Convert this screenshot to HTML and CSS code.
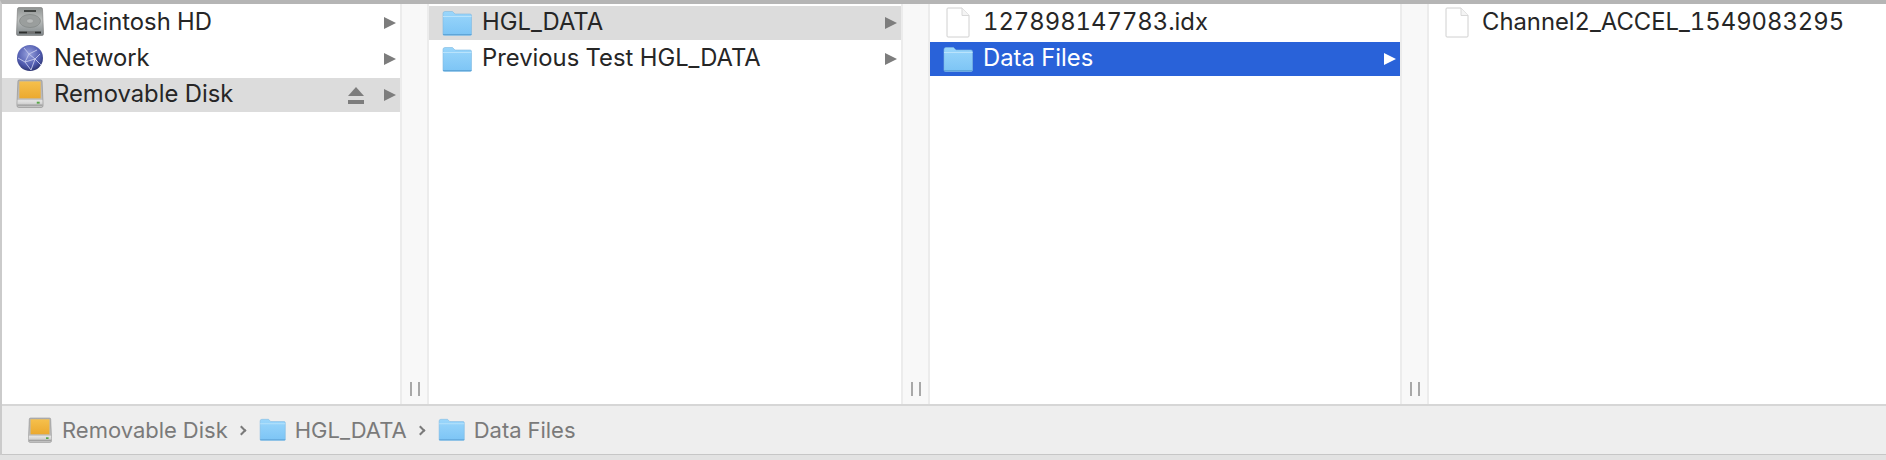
FILE: index.html
```html
<!DOCTYPE html>
<html lang="en">
<head>
<meta charset="utf-8">
<title>Finder</title>
<link rel="stylesheet" href="styles.css">
</head>
<body>
<svg class="defs" width="0" height="0" aria-hidden="true">
  <defs>
    <linearGradient id="fb" x1="0" y1="0" x2="0" y2="1"><stop offset="0" stop-color="#9ad6fb"/><stop offset="1" stop-color="#7cc4f5"/></linearGradient>
    <linearGradient id="ob" x1="0" y1="0" x2="0" y2="1"><stop offset="0" stop-color="#f6c04c"/><stop offset="1" stop-color="#eba92f"/></linearGradient>
    <linearGradient id="gb" x1="0" y1="0" x2="0" y2="1"><stop offset="0" stop-color="#b4b4b4"/><stop offset=".7" stop-color="#bdbdbd"/><stop offset=".75" stop-color="#e4e4e4"/><stop offset="1" stop-color="#bcbcbc"/></linearGradient>
    <linearGradient id="hd" x1="0" y1="0" x2="0" y2="1"><stop offset="0" stop-color="#8f9392"/><stop offset=".45" stop-color="#bcbfbe"/><stop offset="1" stop-color="#80878a"/></linearGradient>
    <radialGradient id="globe" cx=".45" cy=".35" r=".75"><stop offset="0" stop-color="#98a2de"/><stop offset=".6" stop-color="#4f5aae"/><stop offset="1" stop-color="#1e2456"/></radialGradient>
    <symbol id="folder" viewBox="0 0 30 26">
      <path d="M1 3.500Q1 1.500 3 1.500H10.500L13 4H28Q29.500 4 29.500 5.500V24Q29.500 25.500 28 25.500H2.500Q1 25.500 1 24Z" fill="url(#fb)" stroke="#7fb8e0" stroke-width=".6"/>
      <path d="M1 6.500H29.500" stroke="#b9e3fc" stroke-width="1"/>
      <path d="M1 24.500H29.500" stroke="#5fa6d8" stroke-width="1"/>
    </symbol>
    <symbol id="file" viewBox="0 0 24 31">
      <path d="M1 2Q1 1 2 1H16L23 8.500V29Q23 30 22 30H2Q1 30 1 29Z" fill="#fff" stroke="#d0d0d0"/>
      <path d="M16 1V8.500H23" fill="#f4f4f4" stroke="#d8d8d8"/>
    </symbol>
    <symbol id="removable" viewBox="0 0 28 30">
      <path d="M3 1H25Q26.500 1 26.500 2.500L27.500 25V27.500Q27.500 29.500 25.500 29.500H2.500Q.5 29.500 .5 27.500V25L1.500 2.500Q1.500 1 3 1Z" fill="url(#gb)" stroke="#8b8b8b" stroke-width=".6"/>
      <rect x="3" y="2.500" width="22" height="17.500" fill="url(#ob)"/>
      <path d="M1 27H27" stroke="#8f8f8f" stroke-width="1"/>
      <rect x="21" y="23.500" width="3" height="2" fill="#58a848"/>
    </symbol>
    <symbol id="hdd" viewBox="0 0 28 29">
      <path d="M3 .5H25Q26.500 .5 26.500 2L27.500 25V27Q27.500 28.500 26 28.500H2Q.5 28.500 .5 27V25L1.500 2Q1.500 .5 3 .5Z" fill="url(#hd)" stroke="#666" stroke-width=".5"/>
      <ellipse cx="14" cy="14" rx="10.500" ry="6.500" fill="#9a9e9d" stroke="#7b7f7e" stroke-width=".6"/>
      <ellipse cx="14" cy="14" rx="3.500" ry="2.200" fill="#b7bab9" stroke="#7b7f7e" stroke-width=".4"/>
      <rect x="8" y="3" width="12" height="2" fill="#3f4341"/>
      <path d="M3 25.500H25" stroke="#2c2e2d" stroke-width="2"/>
      <path d="M12 24.500V26.500M14 24.500V26.500M16 24.500V26.500M18 24.500V26.500" stroke="#d8d8d8" stroke-width=".8"/>
    </symbol>
    <symbol id="globe-icon" viewBox="0 0 26 26">
      <circle cx="13" cy="13" r="13" fill="url(#globe)"/>
      <path d="M7 3 12 9 20 5M12 9 8 17 14 25M12 9 18 14 23 9M18 14 14 25M8 17 1 13M18 14 24 20M8 17 18 14" fill="none" stroke="#c6cbee" stroke-width=".9"/>
    </symbol>
  </defs>
</svg>
<main class="window">
  <div class="columns">
    <section class="col col-a">
      <div class="row">
        <svg class="icon disk"><use href="#hdd"/></svg>
        <span class="name">Macintosh HD</span>
        <span class="arrow"></span>
      </div>
      <div class="row">
        <svg class="icon globe"><use href="#globe-icon"/></svg>
        <span class="name">Network</span>
        <span class="arrow"></span>
      </div>
      <div class="row current">
        <svg class="icon disk"><use href="#removable"/></svg>
        <span class="name">Removable Disk</span>
        <span class="eject"></span>
        <span class="arrow"></span>
      </div>
    </section>
    <div class="divider"></div>
    <section class="col col-b">
      <div class="row current">
        <svg class="icon folder"><use href="#folder"/></svg>
        <span class="name">HGL_DATA</span>
        <span class="arrow"></span>
      </div>
      <div class="row">
        <svg class="icon folder"><use href="#folder"/></svg>
        <span class="name">Previous Test HGL_DATA</span>
        <span class="arrow"></span>
      </div>
    </section>
    <div class="divider"></div>
    <section class="col col-c">
      <div class="row">
        <svg class="icon file"><use href="#file"/></svg>
        <span class="name">127898147783.idx</span>
      </div>
      <div class="row selected">
        <svg class="icon folder"><use href="#folder"/></svg>
        <span class="name">Data Files</span>
        <span class="arrow"></span>
      </div>
    </section>
    <div class="divider"></div>
    <section class="col col-d">
      <div class="row">
        <svg class="icon file"><use href="#file"/></svg>
        <span class="name">Channel2_ACCEL_1549083295</span>
      </div>
    </section>
  </div>
  <footer class="pathbar">
    <svg class="crumb-icon crumb-disk"><use href="#removable"/></svg>
    <span class="crumb">Removable Disk</span>
    <span class="chev"></span>
    <svg class="crumb-icon crumb-folder"><use href="#folder"/></svg>
    <span class="crumb">HGL_DATA</span>
    <span class="chev"></span>
    <svg class="crumb-icon crumb-folder"><use href="#folder"/></svg>
    <span class="crumb">Data Files</span>
  </footer>
</main>
</body>
</html>
```
FILE: styles.css
```css
* { box-sizing: border-box; }
html, body { margin: 0; height: 100%; }
body {
  width: 1886px;
  height: 460px;
  overflow: hidden;
  background: #e2e2e2;
  font-family: "Inter", "Liberation Sans", sans-serif;
  font-variant-numeric: tabular-nums;
  color: #262626;
}
.defs { display: block; height: 0; }
.window {
  height: 455px;
  display: flex;
  flex-direction: column;
  border-top: 4px solid #b5b5b5;
  border-left: 2px solid #cbcbcb;
  background: #fff;
}
.columns { flex: 1; display: flex; min-height: 0; }
.col {
  display: flex;
  flex-direction: column;
  gap: 2px;
  padding-top: 2px;
}
.col-a { width: 398px; }
.col-b { width: 472px; }
.col-c { width: 470px; }
.col-d { flex: 1; }
.divider {
  position: relative;
  width: 29px;
  background: #f8f8f8;
  border-left: 2px solid #ececec;
  border-right: 2px solid #ececec;
}
.divider::after {
  content: "";
  position: absolute;
  left: 8px;
  bottom: 8px;
  width: 6px;
  height: 14px;
  border-left: 2px solid #a8a8a8;
  border-right: 2px solid #a8a8a8;
  box-sizing: content-box;
}
.row {
  height: 34px;
  display: flex;
  align-items: center;
  padding-left: 13px;
  padding-right: 4px;
  font-size: 23.800px;
  line-height: 30px;
  white-space: nowrap;
}
.current { background: #dcdcdc; }
.selected { background: #2962d9; color: #fff; }
.icon { flex: none; display: block; }
.folder { width: 30px; height: 26px; margin-right: 10px; margin-bottom: 1px; }
.file { width: 24px; height: 31px; margin-left: 3px; margin-right: 13px; margin-bottom: 1px; }
.disk { width: 28px; height: 29px; margin-left: 1px; margin-right: 10px; margin-bottom: 3px; }
.globe { width: 26px; height: 26px; margin-left: 2px; margin-right: 11px; margin-bottom: 2px; }
.name { flex: 1; position: relative; top: -1px; }
.arrow {
  flex: none;
  width: 0;
  height: 0;
  margin-bottom: 1px;
  border-left: 12px solid #7d7d7d;
  border-top: 6.500px solid transparent;
  border-bottom: 6.500px solid transparent;
}
.selected .arrow { border-left-color: #fff; }
.eject {
  flex: none;
  position: relative;
  width: 16px;
  height: 17px;
  margin-right: 20px;
}
.eject::before {
  content: "";
  position: absolute;
  left: 0;
  top: 0;
  border-left: 8px solid transparent;
  border-right: 8px solid transparent;
  border-bottom: 9px solid #7d7d7d;
}
.eject::after {
  content: "";
  position: absolute;
  left: 0;
  bottom: 0;
  width: 16px;
  height: 4px;
  background: #7d7d7d;
}
.pathbar {
  flex: none;
  height: 51px;
  display: flex;
  align-items: center;
  padding-left: 26px;
  background: #eeeeee;
  border-top: 2px solid #d6d6d6;
  border-bottom: 1px solid #c6c6c6;
  font-size: 22px;
  color: #7a7a7a;
  white-space: nowrap;
}
.crumb-icon { flex: none; display: block; margin-bottom: 1px; }
.crumb-disk { width: 24px; height: 26px; margin-right: 10px; }
.crumb-folder { width: 27px; height: 23px; margin-right: 9px; }
.chev {
  flex: none;
  width: 7px;
  height: 7px;
  margin: 0 14px 0 10px;
  border-top: 2px solid #7a7a7a;
  border-right: 2px solid #7a7a7a;
  transform: rotate(45deg);
}
```
